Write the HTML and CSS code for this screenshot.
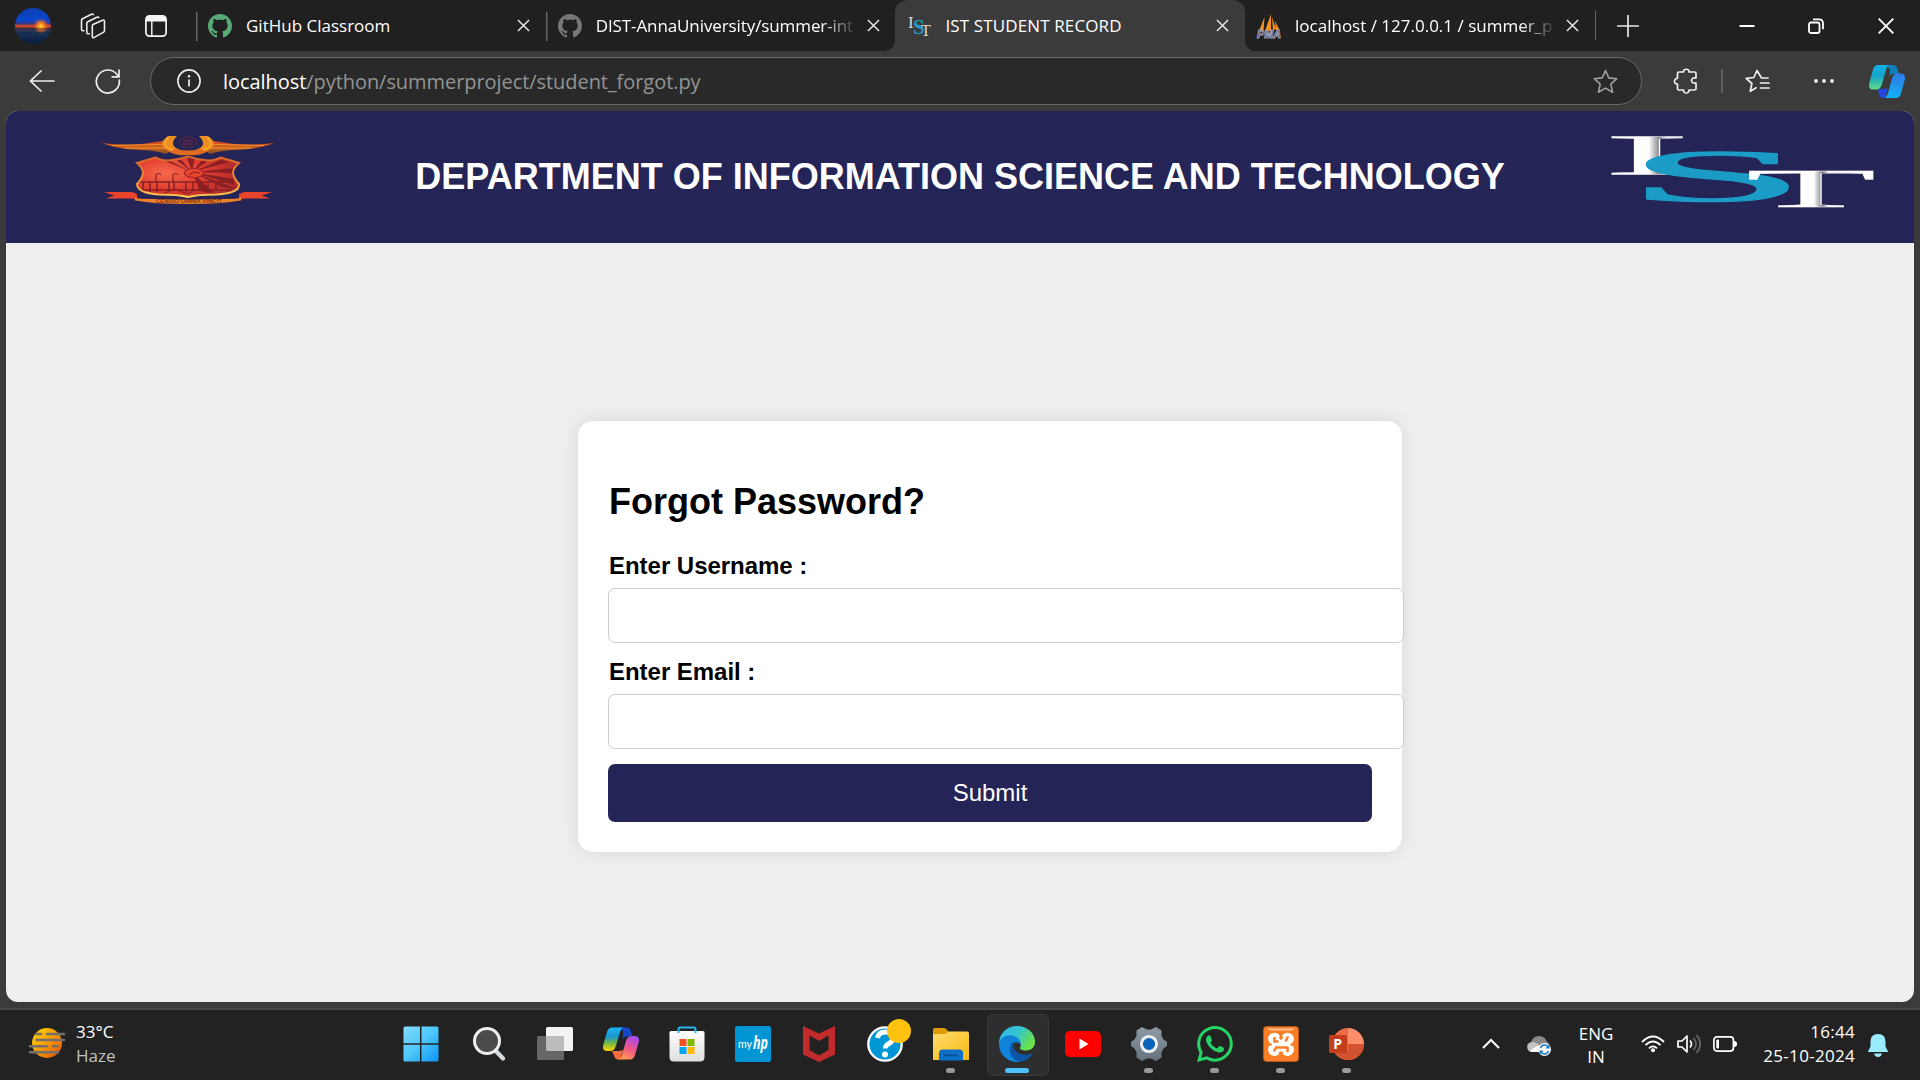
FILE: index.html
```html
<!DOCTYPE html>
<html lang="en">
<head>
<meta charset="utf-8">
<title>IST STUDENT RECORD</title>
<link rel="stylesheet" href="styles.css">
</head>
<body>
<svg class="defs" width="0" height="0" aria-hidden="true">
  <defs>
    <symbol id="close" viewBox="0 0 14 14"><path d="M1 1L13 13M13 1L1 13" fill="none" stroke="#e8e8e8" stroke-width="1.6"/></symbol>
    <symbol id="github" viewBox="0 0 16 16"><path fill="currentColor" d="M8 0C3.58 0 0 3.58 0 8c0 3.54 2.29 6.53 5.47 7.59.4.07.55-.17.55-.38 0-.19-.01-.82-.01-1.49-2.01.37-2.53-.49-2.69-.94-.09-.23-.48-.94-.82-1.13-.28-.15-.68-.52-.01-.53.63-.01 1.08.58 1.23.82.72 1.21 1.87.87 2.33.66.07-.52.28-.87.51-1.07-1.78-.2-3.64-.89-3.64-3.95 0-.87.31-1.59.82-2.15-.08-.2-.36-1.02.08-2.12 0 0 .67-.21 2.2.82.64-.18 1.32-.27 2-.27s1.36.09 2 .27c1.53-1.04 2.2-.82 2.2-.82.44 1.1.16 1.92.08 2.12.51.56.82 1.27.82 2.15 0 3.07-1.87 3.75-3.65 3.95.29.25.54.73.54 1.48 0 1.07-.01 1.93-.01 2.2 0 .21.15.46.55.38A8.01 8.01 0 0 0 16 8c0-4.42-3.58-8-8-8z"/></symbol>
  </defs>
</svg>

<header class="tabstrip">
  <div class="strip-tools">
    <svg class="avatar" viewBox="0 0 36 36">
      <defs>
        <linearGradient id="sky" x1="0" y1="0" x2="0" y2="1"><stop offset="0" stop-color="#0a3fae"/><stop offset=".34" stop-color="#0c46d0"/><stop offset=".44" stop-color="#3a3a80"/><stop offset=".5" stop-color="#e8481c"/><stop offset=".56" stop-color="#5a3344"/><stop offset=".66" stop-color="#1c3358"/><stop offset="1" stop-color="#081c3e"/></linearGradient>
        <radialGradient id="sun" cx=".72" cy=".5" r=".22"><stop offset="0" stop-color="#ffe23a"/><stop offset=".35" stop-color="#ff8a1c"/><stop offset="1" stop-color="#ff5a10" stop-opacity="0"/></radialGradient>
      </defs>
      <circle cx="18" cy="18" r="18" fill="url(#sky)"/><circle cx="18" cy="18" r="18" fill="url(#sun)"/>
      <path d="M1 21h34M4 25h28" stroke="#14263f" stroke-width="1.2" opacity=".7"/>
    </svg>
    <svg class="workspaces" viewBox="0 0 26 26" fill="none" stroke="#ececec" stroke-width="1.6" stroke-linejoin="round">
      <path d="M13 11.500l9.500-4.300q2-.7 2 1.300v9q0 1.300-1.200 1.900l-9 5q-2 .9-2-1.200V13q0-1 .7-1.500z"/>
      <path d="M9.800 20.500q-3 1-3-1.200V10.500q0-1.200 1-1.800l9-4.500q1.500-.8 2.200.9"/>
      <path d="M4.500 17.500q-3 .8-3-1.200V7.500q0-1.200 1-1.800L11.500 1.300q1.500-.8 2.200.9"/>
    </svg>
    <svg class="vtabs" viewBox="0 0 22 22"><rect x=".9" y=".9" width="20.200" height="20.200" rx="3.500" fill="none" stroke="#f5f5f5" stroke-width="1.700"/><path d="M1 6.500V4q0-3 3-3h14q3 0 3 3v2.500z" fill="#f5f5f5"/><path d="M6.800 6v15" stroke="#f5f5f5" stroke-width="1.400"/></svg>
  </div>
  <div class="tab tab--sep">
    <svg class="favicon favicon--green"><use href="#github"/></svg>
    <span class="tab-title">GitHub Classroom</span>
    <svg class="tab-close"><use href="#close"/></svg>
  </div>
  <div class="tab tab--sep">
    <svg class="favicon favicon--grey"><use href="#github"/></svg>
    <span class="tab-title tab-title--fade tab-title--repo">DIST-AnnaUniversity/summer-int</span>
    <svg class="tab-close"><use href="#close"/></svg>
  </div>
  <div class="tab tab--active">
    <svg class="favicon" viewBox="0 0 24 24" font-family="Liberation Serif, serif">
      <text x="1" y="14" font-size="17" fill="#d8d8d8">I</text><text x="6" y="20" font-size="21" font-weight="bold" fill="#1e9cc4">S</text><text x="14" y="22" font-size="16" fill="#d8d8d8">T</text>
    </svg>
    <span class="tab-title tab-title--record">IST STUDENT RECORD</span>
    <svg class="tab-close"><use href="#close"/></svg>
  </div>
  <div class="tab">
    <svg class="favicon" viewBox="0 0 24 24">
      <path d="M7.500 3L2 17h4.500zM14 0L8 17h6zM15 3l1 13 3-1zM18 7l1 9 4 1z" fill="#f7931e"/>
      <text x="0" y="24" font-family="Liberation Sans, sans-serif" font-weight="bold" font-style="italic" font-size="10" textLength="24" lengthAdjust="spacingAndGlyphs" fill="#23234d" stroke="#a5a5bd" stroke-width=".8">PMA</text>
    </svg>
    <span class="tab-title tab-title--fade">localhost / 127.0.0.1 / summer_p</span>
    <svg class="tab-close"><use href="#close"/></svg>
  </div>
  <div class="newtab"><svg viewBox="0 0 22 22" width="22" height="22"><path d="M11 0v22M0 11h22" stroke="#e8e8e8" stroke-width="1.700"/></svg></div>
  <div class="window-controls">
    <svg viewBox="0 0 16 16"><path d="M.5 8h15" stroke="#fff" stroke-width="2"/></svg>
    <svg viewBox="0 0 16 16" fill="none" stroke="#fff" stroke-width="1.800"><rect x="1" y="4.500" width="10.500" height="10.500" rx="2"/><path d="M5 1.300h6q4 0 4 4v6"/></svg>
    <svg viewBox="0 0 16 16"><path d="M.7.700l14.600 14.600M15.300.7L.7 15.300" stroke="#fff" stroke-width="1.900"/></svg>
  </div>
</header>

<nav class="toolbar">
  <svg class="nav-icon nav-back" viewBox="0 0 26 26" fill="none" stroke="#eee" stroke-width="1.700"><path d="M25.500 13H1.500M12.500 2.500L1.500 13l11 10.500"/></svg>
  <svg class="nav-icon nav-reload" viewBox="0 0 26 26" fill="none" stroke="#eee" stroke-width="1.700"><path d="M24.200 11.500A11.500 11.500 0 1 1 22 6.500l1.700 2"/><path d="M24 1.500v7.300h-7.500"/></svg>
  <div class="address">
    <svg class="info" viewBox="0 0 24 24"><circle cx="12" cy="12" r="11.100" fill="none" stroke="#eee" stroke-width="1.600"/><path d="M12 10.500v7" stroke="#eee" stroke-width="1.700"/><circle cx="12" cy="7.300" r="1.200" fill="#eee"/></svg>
    <span class="url"><span class="url-host">localhost</span><span class="url-path">/python/summerproject/student_forgot.py</span></span>
    <svg class="star" viewBox="0 0 24 24"><path d="M12 1.500l3.200 7 7.600.8-5.700 5.200 1.700 7.800-6.800-4-6.800 4 1.700-7.800L1.200 9.300l7.600-.8z" fill="none" stroke="#a0a0a0" stroke-width="1.500" stroke-linejoin="round"/></svg>
  </div>
  <div class="actions">
    <svg class="ext" viewBox="0 0 24 26" fill="none" stroke="#eee" stroke-width="1.700" stroke-linejoin="round"><path d="M5 4h4.500C9 .3 15.500.3 15 4h5.500q1.500 0 1.500 1.500v4.500c-6-1.500-6 6.500 0 5v5.500q0 1.500-1.500 1.500H15c.5 4-6 4-5.500 0H5q-1.500 0-1.500-1.500V16c-4 .5-4-6 0-5.500v-5Q3.500 4 5 4z"/></svg>
    <i class="divider"></i>
    <svg class="fav" viewBox="0 0 25 24" fill="none" stroke="#eee" stroke-width="1.700" stroke-linejoin="round" stroke-linecap="round"><path d="M23 9h-6.500L12 1.500 8.800 8.500l-7.600.8 5.700 5.200-1.700 7.800 6-3.500M15.500 14h8.500M15.500 19h8.500"/></svg>
    <svg class="dots" viewBox="0 0 20 4" fill="#eee"><circle cx="2" cy="2" r="1.900"/><circle cx="10" cy="2" r="1.900"/><circle cx="18" cy="2" r="1.900"/></svg>
    <svg class="copilot" viewBox="0 0 36 33">
      <defs>
        <linearGradient id="ca" x1="0" y1="0" x2="0" y2="1"><stop offset="0" stop-color="#0fb0e8"/><stop offset=".45" stop-color="#16a3c9"/><stop offset="1" stop-color="#5ce086"/></linearGradient>
        <linearGradient id="cb" x1="0" y1="0" x2="0" y2="1"><stop offset="0" stop-color="#2f7be6"/><stop offset="1" stop-color="#14b0f8"/></linearGradient>
      </defs>
      <path d="M13 0h11q3.500 0 4.500 4l1.500 5h-6q-3 0-4 4l1-6q0-5-3-5z" fill="#0a7fb8"/>
      <path d="M9 24h7l3-1-3 10h-2q-3 0-4-4z" fill="#2048e0"/>
      <path d="M9 0h12q-3 .8-4 5l-4 14q-1.500 5.500-6 5.500H4q-5 0-3.800-6L4 4.500Q5.500 0 9 0z" fill="url(#ca)"/>
      <path d="M27 33H15q3-.8 4-5l4-14.500q1.500-5 6-5h3q5 0 3.800 6L32 28.500Q30.500 33 27 33z" fill="url(#cb)"/>
    </svg>
  </div>
</nav>

<div class="viewport">
  <div class="page">
    <div class="banner">
      <svg class="crest" viewBox="0 0 172 68">
        <defs>
          <linearGradient id="wing" x1="0" y1="0" x2="0" y2="1"><stop offset="0" stop-color="#d9481a"/><stop offset=".6" stop-color="#c4641e"/><stop offset="1" stop-color="#7a4a24"/></linearGradient>
          <radialGradient id="shield" cx=".3" cy=".4" r=".7"><stop offset="0" stop-color="#f4694e"/><stop offset=".5" stop-color="#e23c2c"/><stop offset="1" stop-color="#a82a2c"/></radialGradient>
          <linearGradient id="gold" x1="0" y1="0" x2="0" y2="1"><stop offset="0" stop-color="#d8632c"/><stop offset=".6" stop-color="#e8903c"/><stop offset="1" stop-color="#ffcc55"/></linearGradient>
          <clipPath id="shield-clip"><path d="M35 27l18-5.500q8 3.500 13 3 10-.5 20-4 10 3.500 20 4 5 .5 13-3L137 27q-6 5-6 10 1 6 6 11 1 9-22 10.500-20 0-29 2.500-9-2.500-29-2.500-22-1.500-22-10.500 5-5 6-11 0-5-6-10z"/></clipPath>
        </defs>
        <path d="M0 7q30 4 60-2l10 9-6 4q-12-4-26-4Q14 13 0 7z" fill="url(#wing)"/>
        <path d="M172 7q-30 4-60-2l-10 9 6 4q12-4 26-4 24-1 38-7z" fill="url(#wing)"/>
        <path d="M10 9.500l50-1M22 12l40 0M162 9.500l-50-1M150 12l-40 0" stroke="#ef9030" stroke-width="1"/>
        <path d="M66 0q-14 10 4 16h32q18-6 4-16h-9q9 9-2 13.500-9 3-18 0Q66 9 75 0z" fill="#ec8c22"/>
        <path d="M66 15l8-2q12 3 24 0l8 2q-6 5-20 4-14 1-20-4z" fill="#e06a20"/>
        <path d="M66 2q-7 8 5 12M106 2q7 8-5 12" fill="none" stroke="#ffb733" stroke-width="2" stroke-dasharray="2 1"/>
        <ellipse cx="86" cy="6" rx="8.500" ry="5.500" fill="#30224e" stroke="#4f2748" stroke-width="1.200"/>
        <path d="M81 5h10M81 8h9" stroke="#6e2a45"/>
        <g clip-path="url(#shield-clip)">
          <path d="M30 18h112v48H30z" fill="url(#shield)"/>
          <path d="M90 36L48 19h8zM90 36L68 19h7zM90 36l-5-15h8zM90 36l12-14h8zM90 36l29-12 8 2zM90 36l42-4v5zM90 36l42 7v6zM90 36l30 15 16 2zM90 36l8 19 14 2z" fill="#7d1c22" opacity=".85"/>
          <ellipse cx="92" cy="37" rx="9.500" ry="4.500" fill="#e9452f" stroke="#98242a" stroke-width="1.200"/>
          <path d="M87 39l5-3 6 1" fill="none" stroke="#801d22"/>
          <path d="M34 46h92M36 54h94M41 46v10M48 46v10M55 46v10M67 46v9M72 46v9M84 46v11M91 46v9M98 46v9M106 46v9M114 46v9" stroke="#8a2127" stroke-width="1.600"/>
          <path d="M54 46v-7q3-3 5 0M71 46v-7q3-3 5 0M62 58q10-8 22 0M86 58q10-8 22 0" fill="none" stroke="#8a2127" stroke-width="1.200"/>
        </g>
        <path d="M35 27l18-5.500q8 3.500 13 3 10-.5 20-4 10 3.500 20 4 5 .5 13-3L137 27q-6 5-6 10 1 6 6 11 1 9-22 10.500-20 0-29 2.500-9-2.500-29-2.500-22-1.500-22-10.500 5-5 6-11 0-5-6-10z" fill="none" stroke="url(#gold)" stroke-width="2"/>
        <path d="M2 56h28l5 2v6l-5-1.500H4l8-3zM170 56h-28l-5 2v6l5-1.500h26l-8-3z" fill="#e8432b"/>
        <path d="M33 61q2 1.500 6 1.800l47 1 47-1q4-.3 6-1.800v3.500q-20 3.500-53 3.500T33 64.500z" fill="#ef8128"/>
        <text x="54" y="67.200" font-family="Liberation Sans, sans-serif" font-weight="bold" font-size="4.800" textLength="66" lengthAdjust="spacingAndGlyphs" fill="#8b351c">CENSIO OMNIA VINCIT</text>
      </svg>
      <h1 class="banner-title">DEPARTMENT OF INFORMATION SCIENCE AND TECHNOLOGY</h1>
      <svg class="ist" viewBox="0 0 266 72" font-family="Liberation Serif, serif">
        <defs>
          <linearGradient id="il" x1="0" x2="1"><stop offset="0" stop-color="#fff"/><stop offset=".52" stop-color="#fff"/><stop offset=".64" stop-color="#85858b"/><stop offset=".72" stop-color="#eee"/><stop offset="1" stop-color="#ddd"/></linearGradient>
          <linearGradient id="tl" x1="0" x2="1"><stop offset="0" stop-color="#fff"/><stop offset=".52" stop-color="#fff"/><stop offset=".59" stop-color="#77777c"/><stop offset=".63" stop-color="#eee"/><stop offset="1" stop-color="#fff"/></linearGradient>
        </defs>
        <text transform="translate(-4.500 38.500) scale(4.600 1)" font-size="58" fill="url(#il)" stroke="#fff" stroke-width=".3">I</text>
        <text transform="translate(20 65) scale(4.350 1)" font-size="74" fill="#1a9cc6" stroke="#1a9cc6" stroke-width="1.300">S</text>
        <text transform="translate(139 71) scale(3.950 1)" font-size="54" fill="url(#tl)" stroke="#fff" stroke-width=".3">T</text>
      </svg>
    </div>
    <main class="content">
      <form class="card">
        <h2 class="card-title">Forgot Password?</h2>
        <label class="label" for="username">Enter Username :</label>
        <input class="input" id="username" type="text">
        <label class="label" for="email">Enter Email :</label>
        <input class="input" id="email" type="text">
        <button class="submit" type="button">Submit</button>
      </form>
    </main>
  </div>
</div>

<footer class="taskbar">
  <div class="weather">
    <svg viewBox="0 0 36 30" width="36" height="30"><defs><linearGradient id="wz" x1="0" y1="0" x2="1" y2="1"><stop offset=".1" stop-color="#fdd000"/><stop offset=".6" stop-color="#f38a0a"/><stop offset="1" stop-color="#dd4c08"/></linearGradient></defs><circle cx="18" cy="15" r="15" fill="url(#wz)"/><path d="M7.500 6h4.500M18 6h17M7.500 12h27.500M1 18.300h17M24 18.300h4.500M1 24.300h28" stroke="#77706a" stroke-width="2.600" stroke-linecap="round"/></svg>
    <div class="weather-text"><div class="temp">33°C</div><div class="cond">Haze</div></div>
  </div>
  <div class="apps">
    <div class="app"><svg viewBox="0 0 36 36"><defs><linearGradient id="win" x1="0" y1="0" x2="1" y2="1"><stop offset="0" stop-color="#84dcff"/><stop offset=".5" stop-color="#4cc6fb"/><stop offset="1" stop-color="#0c95f5"/></linearGradient></defs><path d="M2 .5h15v16.700H.5V2Q.5.500 2 .5zM18.500.500H34q1.500 0 1.500 1.500v15.200h-17zM.5 18.700H17v16.800H2q-1.500 0-1.500-1.500zM18.500 18.700h17V34q0 1.500-1.500 1.500H18.500z" fill="url(#win)"/></svg></div>
    <div class="app"><svg viewBox="0 0 36 36"><path d="M24 24l8 8.500" stroke="#d5d9dc" stroke-width="4.400" stroke-linecap="round"/><circle cx="16" cy="15" r="12.500" fill="#4a4a4a" stroke="#eceeef" stroke-width="3"/></svg></div>
    <div class="app"><svg viewBox="0 0 36 36"><rect x="9" y="1" width="27" height="24" rx="1.500" fill="#f3f3f3"/><rect x="0" y="10" width="27" height="24" rx="1.500" fill="#666" /><path d="M9 10h18v15H10.500Q9 25 9 23.500z" fill="#bcbcbc"/></svg></div>
    <div class="app"><svg viewBox="0 0 36 36">
      <defs><linearGradient id="cc" x1="0" y1="0" x2="0" y2="1"><stop offset=".05" stop-color="#1db0f0"/><stop offset=".4" stop-color="#1c94cc"/><stop offset=".65" stop-color="#6ab84a"/><stop offset="1" stop-color="#ffd400"/></linearGradient><linearGradient id="cd" x1=".7" y1="0" x2=".3" y2="1"><stop offset="0" stop-color="#a34cf0"/><stop offset=".5" stop-color="#f0548c"/><stop offset="1" stop-color="#ff9a50"/></linearGradient></defs>
      <path d="M13 1.500h11q3 0 4 4l1.500 5h-6q-3 0-4 3l.5-6q0-5-3-5z" fill="#1647c8"/>
      <path d="M9 25h8l3-1-3 9.500h-2q-3 0-4-4z" fill="#fb6a3e"/>
      <path d="M9 1.500h12q-3 .8-4 5l-4 13q-1.500 5.500-6 5.500H4q-5 0-3.800-6L4 6Q5.500 1.500 9 1.500z" fill="url(#cc)"/>
      <path d="M27 33.500H15q3-.8 4-5l4-13.500q1.500-5 6-5h3q5 0 3.800 6L32 29Q30.500 33.500 27 33.500z" fill="url(#cd)"/></svg></div>
    <div class="app"><svg viewBox="0 0 36 36"><defs><linearGradient id="st" x1="0" y1="0" x2="0" y2="1"><stop offset="0" stop-color="#fff"/><stop offset="1" stop-color="#dedede"/></linearGradient></defs><path d="M2 5h32q1.500 0 1.500 1.500V31q0 4.500-4.500 4.500H5Q.5 35.500.5 31V6.500Q.5 5 2 5z" fill="url(#st)"/><path d="M9.500 7V3q0-1.500 1.500-1.500h14q1.500 0 1.500 1.500v4" fill="none" stroke="#2bb4ea" stroke-width="2"/><path d="M10.500 13h7v7h-7z" fill="#f25022"/><path d="M18.500 13h7v7h-7z" fill="#7fba00"/><path d="M10.500 21h7v7h-7z" fill="#00a4ef"/><path d="M18.500 21h7v7h-7z" fill="#ffb900"/></svg></div>
    <div class="app"><svg viewBox="0 0 36 36"><rect width="36" height="36" rx="2" fill="#0096d6"/><text x="3" y="21.500" font-family="Lato, sans-serif" font-size="11" textLength="14" lengthAdjust="spacingAndGlyphs" fill="#fff">my</text><text x="18" y="22.500" font-family="Open Sans, sans-serif" font-style="italic" font-weight="bold" font-size="17" textLength="15" lengthAdjust="spacingAndGlyphs" fill="#fff">hp</text></svg></div>
    <div class="app"><svg viewBox="0 0 36 36"><path fill-rule="evenodd" d="M2 0l16 7.500L34 0v28.500L18 36 2 28.500zM8.500 9.500v14.500l9.500 5.500 9.500-5.500V9.500L18 15z" fill="#c12b2b"/></svg></div>
    <div class="app"><svg viewBox="0 0 36 36"><circle cx="18" cy="18" r="16.700" fill="#0096d6" stroke="#fff" stroke-width="2.300"/><path d="M10.500 12q1-6 8-6 7.500 0 7.500 6 0 3.500-4 5.500-3.800 2-3.800 5" fill="none" stroke="#fff" stroke-width="4.800"/><circle cx="18" cy="28.500" r="3" fill="#fff"/><circle cx="32" cy="5" r="12" fill="#ffc20e"/></svg></div>
    <div class="app app--running"><svg viewBox="0 0 36 36"><defs><linearGradient id="fo" x1="0" y1="0" x2="1" y2="1"><stop offset="0" stop-color="#ffdc72"/><stop offset="1" stop-color="#f8b90c"/></linearGradient></defs><path d="M0 12V4q0-2 2-2h9q1 0 2 1l3 3v6z" fill="#e09c05"/><path d="M0 8h11q1.500 0 2.500-1t2.500-1.500h18q2 0 2 2V34H0z" fill="url(#fo)"/><path d="M6 34.500V27q0-3.500 3.500-3.500h17Q30 23.500 30 27v7.500z" fill="#0c70c8"/><path d="M11 29.300h14" stroke="#0a4d94" stroke-width="1.600"/></svg></div>
    <div class="app app--active"><svg viewBox="0 0 36 36">
      <defs><linearGradient id="e1" x1="0" y1="0" x2="1" y2=".5"><stop offset="0" stop-color="#2cb4ec"/><stop offset=".55" stop-color="#35c6c8"/><stop offset="1" stop-color="#6be34a"/></linearGradient><linearGradient id="e2" x1="0" y1="0" x2=".6" y2="1"><stop offset="0" stop-color="#1480d4"/><stop offset="1" stop-color="#0c86e2"/></linearGradient></defs>
      <path d="M0 18C0 7 8 0 18 0s18 7 18 15.500c0 6-4 9-9 9s-6.500-1.500-6-3c2-3 .5-8-5.500-9.500C8 10.500 2 13 0 18z" fill="url(#e1)"/>
      <path d="M0 18C1 12 7 8.500 13 9.500s9.500 5.500 8.500 9c-4-5-10-1-9.500 4.500S17 34 22 35.500C10 38 0 29 0 18z" fill="url(#e2)"/>
      <path d="M14.500 15.500c-7 5-3.500 18.500 6 20.300 6-.3 10-3.300 12.500-7 .7-1.500-.5-1.300-1.200-1C23 31 12 26 14.500 15.500z" fill="#0d56a6"/></svg></div>
    <div class="app"><svg viewBox="0 0 36 36"><rect y="5" width="36" height="26" rx="5" fill="#f00"/><path d="M14.500 12.500l9 5.500-9 5.500z" fill="#fff"/></svg></div>
    <div class="app app--running"><svg viewBox="0 0 36 36"><defs><linearGradient id="ge" x1="0" y1="0" x2="0" y2="1"><stop offset="0" stop-color="#8e9aa5"/><stop offset="1" stop-color="#65717c"/></linearGradient></defs><path d="M11 1l5 2.500h4L25 1l5.500 3.500V10l2 3.500L36 16v4l-3.500 2.500-2 3.500v5.500L25 35l-5-2.500h-4L11 35l-5.500-3.500V26l-2-3.500L0 20v-4l3.500-2.500 2-3.500V4.500z" fill="url(#ge)"/><circle cx="18" cy="18" r="7.600" fill="#0a63b8" stroke="#eee" stroke-width="3"/></svg></div>
    <div class="app app--running"><svg viewBox="0 0 16 16"><path fill="#25d366" d="M13.601 2.326A7.850 7.850 0 0 0 7.994 0C3.627 0 .068 3.558.064 7.926c0 1.399.366 2.760 1.057 3.965L0 16l4.204-1.102a7.900 7.900 0 0 0 3.790.965h.004c4.368 0 7.926-3.558 7.930-7.930A7.900 7.900 0 0 0 13.600 2.326zM7.994 14.521a6.600 6.600 0 0 1-3.356-.92l-.24-.144-2.494.654.666-2.433-.156-.251a6.560 6.560 0 0 1-1.007-3.505c0-3.626 2.957-6.584 6.591-6.584a6.560 6.560 0 0 1 4.660 1.931 6.560 6.560 0 0 1 1.928 4.660c-.004 3.639-2.961 6.592-6.592 6.592m3.615-4.934c-.197-.099-1.170-.578-1.353-.646-.182-.065-.315-.099-.445.099-.133.197-.513.646-.627.775-.114.133-.232.148-.43.050-.197-.1-.836-.308-1.592-.985-.59-.525-.985-1.175-1.103-1.372-.114-.198-.011-.304.088-.403.087-.088.197-.232.296-.346.1-.114.133-.198.198-.33.065-.134.034-.248-.015-.347-.05-.099-.445-1.076-.612-1.470-.16-.389-.323-.335-.445-.34-.114-.007-.247-.007-.38-.007a.73.730 0 0 0-.529.247c-.182.198-.691.677-.691 1.654s.71 1.916.81 2.049c.098.133 1.394 2.132 3.383 2.992.47.205.84.326 1.129.418.475.152.904.129 1.246.080.38-.058 1.171-.48 1.338-.943.164-.464.164-.86.114-.943-.049-.084-.182-.133-.38-.232"/></svg></div>
    <div class="app app--running"><svg viewBox="0 0 36 36"><rect x=".5" y=".5" width="35" height="35" rx="3" fill="#f97e28" stroke="#b9581a"/><path d="M4 2.500h28l-3 2H7z" fill="#fcc092"/><g fill="#fff"><circle cx="11.500" cy="13" r="6.300"/><circle cx="24.500" cy="13" r="6.300"/><circle cx="11.500" cy="23.500" r="6.500"/><circle cx="24.500" cy="23.500" r="6.500"/><path d="M10 13h16v11H10z"/></g><path d="M11.500 12v3.500h3M24.500 11.500l-1.500 3M11.500 24.500l1.500-3h10M24.500 25v-3.500M4.500 18.500h3M28.500 18.500h3" fill="none" stroke="#f97e28" stroke-width="2.600" stroke-linecap="round"/><path d="M18 6l-2 6 2 2.500 2-2.500zM18 31l-2.500-5h5z" fill="#f97e28"/></svg></div>
    <div class="app app--running"><svg viewBox="0 0 36 36"><path d="M19 2a16 16 0 1 0 16 16H19z" fill="#ed6c47"/><path d="M19 2a16 16 0 0 1 16 16H19z" fill="#ff8f6b"/><path d="M4.500 25A16 16 0 0 0 35 18H19v7z" fill="#d35230"/><rect x="0" y="9" width="18" height="18" rx="1.500" fill="#c43e1c"/><text x="4.300" y="23" font-family="Open Sans, sans-serif" font-weight="bold" font-size="14" fill="#fff">P</text></svg></div>
  </div>
  <div class="tray">
    <svg class="chev" viewBox="0 0 18 10"><path d="M1 9l8-8 8 8" fill="none" stroke="#fff" stroke-width="2"/></svg>
    <svg class="cloud" viewBox="0 0 24 20"><path d="M4 15q-4-.5-4-4.500T4 6q2-6 8-6t8 6q3 1 3 5z" fill="#8a8a8a"/><path d="M1 14q-2-6 4-8 5 0 8 4v6H5q-3 0-4-2z" fill="#c4c4c4"/><path d="M3 15.500q5-6 12-6.500v7H6q-2 0-3-.5z" fill="#fff"/><circle cx="17.500" cy="13.500" r="6.500" fill="#fff"/><path d="M13.500 12a4.300 4.300 0 0 1 8-.5M21.500 15a4.300 4.300 0 0 1-8 .5M21.800 8.800v3h-3M13.200 18.200v-3h3" fill="none" stroke="#1672c8" stroke-width="1.300"/></svg>
    <div class="lang"><div>ENG</div><div>IN</div></div>
    <svg class="wifi" viewBox="0 0 24 18" fill="none" stroke="#fff" stroke-width="1.800"><path d="M1 7q11-11 22 0M4.500 10.200q7.500-7.400 15 0M8 13.300q4-4 8 0"/><circle cx="12" cy="15.300" r="2" fill="#fff" stroke="none"/></svg>
    <svg class="sound" viewBox="0 0 25 20" fill="none" stroke-width="1.700"><path d="M1 7h4l5-5v16l-5-5H1z" stroke="#fff" stroke-linejoin="round"/><path d="M13 6.500q3 3.500 0 7" stroke="#fff"/><path d="M16.500 4q5 6 0 12M19.500 1q7.500 9 0 18" stroke="#666"/></svg>
    <svg class="battery" viewBox="0 0 24 16"><rect x=".9" y=".9" width="19.500" height="14.200" rx="3" fill="none" stroke="#fff" stroke-width="1.700"/><rect x="3.300" y="3.500" width="2.700" height="9" rx="1" fill="#fff"/><path d="M21 5q3 0 3 3t-3 3z" fill="#fff"/></svg>
    <div class="clock"><div>16:44</div><div>25-10-2024</div></div>
    <svg class="bell" viewBox="0 0 20 23"><path d="M10 0q7.500 0 7.500 7.500v5l2.500 5V18H0v-.5l2.500-5v-5Q2.500 0 10 0zM6 19.500h8q-1 3.500-4 3.500t-4-3.500z" fill="#99ebff"/></svg>
  </div>
</footer>
</body>
</html>
```
FILE: styles.css
```css
* { box-sizing: border-box; }

body {
  margin: 0;
  width: 1920px;
  height: 1080px;
  overflow: hidden;
  display: flex;
  flex-direction: column;
  background: #3b3b3b;
  font-family: "Open Sans", "Noto Sans", sans-serif;
  color: #fff;
}

svg { display: block; flex: none; overflow: visible; }
.defs { position: absolute; }

/* Tab strip */
.tabstrip {
  height: 51px;
  display: flex;
  align-items: center;
  background: #202020;
}
.strip-tools { width: 196px; display: flex; align-items: center; padding-left: 15px; }
.avatar { width: 36px; height: 36px; }
.workspaces { width: 26px; height: 26px; margin-left: 29px; }
.vtabs { width: 22px; height: 22px; margin-left: 39px; }

.tab {
  width: 349.700px;
  height: 51px;
  display: flex;
  align-items: center;
  padding-left: 12px;
}
.tab--sep {
  background: linear-gradient(#666, #666) 0 12px / 1.500px 29px no-repeat;
}
.tab--active {
  position: relative;
  background: #3b3b3b;
  border-radius: 12px 12px 0 0;
}
.tab--active::before,
.tab--active::after {
  content: "";
  position: absolute;
  bottom: 0;
  width: 10px;
  height: 10px;
}
.tab--active::before { left: -10px; background: radial-gradient(circle at 0 0, #202020 9.500px, #3b3b3b 10px); }
.tab--active::after { right: -10px; background: radial-gradient(circle at 100% 0, #202020 9.500px, #3b3b3b 10px); }
.favicon { width: 24px; height: 24px; margin-right: 14px; }
.favicon--green { color: #58ab76; }
.favicon--grey { color: #777; }
.tab-title {
  width: 259px;
  margin-right: 12px;
  white-space: nowrap;
  font-size: 17px;
  line-height: 24px;
}
.tab-title--fade {
  -webkit-mask-image: linear-gradient(90deg, #000 225px, transparent 262px);
  mask-image: linear-gradient(90deg, #000 225px, transparent 262px);
}
.tab-title--repo { letter-spacing: -.1px; }
.tab-title--record { letter-spacing: .13px; }
.tab-close { width: 13px; height: 13px; }

.newtab {
  width: 65px;
  height: 29px;
  display: flex;
  align-items: center;
  justify-content: center;
  border-left: 1.500px solid #666;
}
.window-controls { flex: 1; display: flex; justify-content: space-between; padding: 0 26px 0 79px; }
.window-controls svg { width: 16px; height: 16px; }

/* Toolbar */
.toolbar { height: 60px; display: flex; align-items: center; padding-left: 29px; }
.nav-icon { width: 26px; height: 26px; }
.nav-back { margin-right: 40px; }
.nav-reload { margin-right: 29px; }
.address {
  width: 1492px;
  height: 48px;
  display: flex;
  align-items: center;
  padding: 0 23px 0 26px;
  border: 1.500px solid #686868;
  border-radius: 24px;
  background: #292929;
}
.info { width: 24px; height: 24px; margin-right: 22px; }
.url { flex: 1; padding-top: 2px; font-size: 20px; line-height: 28px; letter-spacing: -.06px; white-space: nowrap; }
.url-path { color: #949494; }
.star { width: 25px; height: 25px; }
.actions { display: flex; align-items: center; padding-left: 32px; }
.ext { width: 24px; height: 26px; margin-right: 23px; }
.divider { width: 1.500px; height: 24px; background: #5c5c5c; margin-right: 22px; }
.fav { width: 25px; height: 24px; margin-right: 44px; }
.dots { width: 20px; height: 4px; margin-right: 35px; }
.copilot { width: 36px; height: 33px; }

/* Page area */
.viewport { height: 899px; padding: 0 6px 6px; border-bottom: 2px solid #484848; }
.page {
  height: 891px;
  display: flex;
  flex-direction: column;
  overflow: hidden;
  border-radius: 12px;
  background: #efefef;
  color: #000;
  font-family: "Liberation Sans", Arial, sans-serif;
}
.banner {
  height: 132px;
  display: flex;
  justify-content: space-between;
  align-items: flex-start;
  padding: 25px 41px 0 96px;
  background: #252456;
}
.crest { width: 172px; height: 68px; }
.banner-title { margin: 20px 0 0 39px; font-size: 36px; line-height: 41px; color: #fff; white-space: nowrap; }
.ist { width: 266px; height: 72px; }

.content { flex: 1; display: flex; justify-content: center; align-items: flex-start; padding: 178px 0 0 60px; }
.card {
  width: 824px;
  padding: 30px;
  border-radius: 15px;
  background: #fff;
  box-shadow: 0 0 20px rgba(0, 0, 0, .1);
}
.card-title { margin: 30px 0; padding-left: 1px; font-size: 36px; line-height: 41px; }
.label { display: block; height: 27px; margin-bottom: 9px; padding-left: 1px; font-size: 24px; font-weight: bold; line-height: 28px; letter-spacing: -.03px; }
.input {
  display: block;
  width: 796px;
  height: 55px;
  margin: 0 0 15px;
  padding: 0 15px;
  border: 1px solid #ccc;
  border-radius: 7px;
  background: #fff;
}
.submit {
  display: block;
  width: 100%;
  height: 58px;
  border: 0;
  border-radius: 7px;
  background: #252456;
  color: #fff;
  font: 24px "Liberation Sans", Arial, sans-serif;
}

/* Taskbar */
.taskbar {
  height: 70px;
  display: grid;
  grid-template-columns: 388px 992px 1fr;
  background: #222;
  font-size: 17px;
  line-height: 24px;
}
.weather { display: flex; align-items: flex-start; padding: 10px 0 0 29px; }
.weather svg { margin-top: 8px; }
.weather-text { margin-left: 11px; }
.cond { color: #c0c0c0; }
.apps { display: grid; grid-template-columns: 67.500px repeat(14, 66px); }
.app { position: relative; display: flex; justify-content: center; align-items: flex-start; padding-top: 16px; }
.app:first-child { padding-right: 1.500px; }
.app svg { position: relative; width: 36px; height: 36px; }
.app--running::after,
.app--active::after {
  content: "";
  position: absolute;
  left: 28.500px;
  top: 58px;
  width: 9px;
  height: 5px;
  border-radius: 3px;
  background: #9a9a9a;
}
.app--active::after { left: 21px; width: 24px; background: #4cc2ff; }
.app--active::before {
  content: "";
  position: absolute;
  left: 3px;
  top: 4px;
  width: 60px;
  height: 60px;
  border: 1px solid #393939;
  border-radius: 6px;
  background: #2e2e2e;
}
.tray { display: flex; align-items: center; padding-left: 102px; }
.chev { width: 18px; height: 10px; margin-top: -3px; }
.cloud { width: 24px; height: 20px; margin-left: 27px; margin-top: 2px; }
.lang { width: 50px; margin-left: 20px; text-align: center; }
.lang div { line-height: 23px; }
.wifi { width: 24px; height: 18px; margin-left: 20px; margin-top: -2px; }
.sound { width: 25px; height: 20px; margin-left: 12px; margin-top: -2px; }
.battery { width: 24px; height: 16px; margin-left: 11px; margin-top: -2px; }
.clock { width: 104px; margin-left: 14px; margin-top: -2px; text-align: right; letter-spacing: .3px; }
.bell { width: 20px; height: 23px; margin-left: 13px; }
```
